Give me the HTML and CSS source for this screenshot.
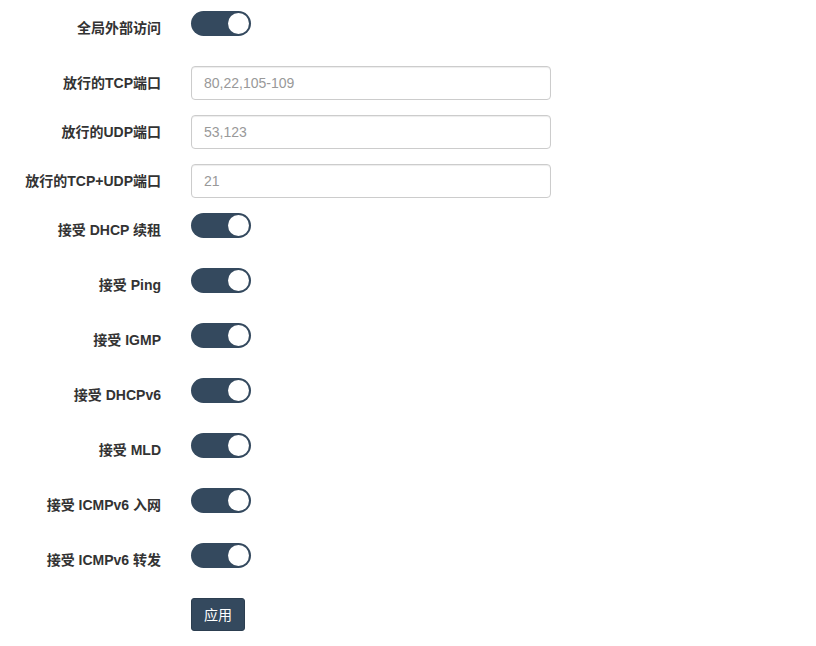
FILE: index.html
```html
<!DOCTYPE html>
<html lang="zh">
<head>
<meta charset="utf-8">
<link rel="stylesheet" href="styles.css">
</head>
<body>
<form class="form">
  <div class="row row-toggle">
    <label class="lbl">全局外部访问</label>
    <div class="ctl"><span class="switch"><span class="knob"></span></span></div>
  </div>
  <div class="row">
    <label class="lbl">放行的TCP端口</label>
    <div class="ctl"><input class="input" type="text" placeholder="80,22,105-109"></div>
  </div>
  <div class="row">
    <label class="lbl">放行的UDP端口</label>
    <div class="ctl"><input class="input" type="text" placeholder="53,123"></div>
  </div>
  <div class="row">
    <label class="lbl">放行的TCP+UDP端口</label>
    <div class="ctl"><input class="input" type="text" placeholder="21"></div>
  </div>
  <div class="row row-toggle">
    <label class="lbl">接受 DHCP 续租</label>
    <div class="ctl"><span class="switch"><span class="knob"></span></span></div>
  </div>
  <div class="row row-toggle">
    <label class="lbl">接受 Ping</label>
    <div class="ctl"><span class="switch"><span class="knob"></span></span></div>
  </div>
  <div class="row row-toggle">
    <label class="lbl">接受 IGMP</label>
    <div class="ctl"><span class="switch"><span class="knob"></span></span></div>
  </div>
  <div class="row row-toggle">
    <label class="lbl">接受 DHCPv6</label>
    <div class="ctl"><span class="switch"><span class="knob"></span></span></div>
  </div>
  <div class="row row-toggle">
    <label class="lbl">接受 MLD</label>
    <div class="ctl"><span class="switch"><span class="knob"></span></span></div>
  </div>
  <div class="row row-toggle">
    <label class="lbl">接受 ICMPv6 入网</label>
    <div class="ctl"><span class="switch"><span class="knob"></span></span></div>
  </div>
  <div class="row row-toggle">
    <label class="lbl">接受 ICMPv6 转发</label>
    <div class="ctl"><span class="switch"><span class="knob"></span></span></div>
  </div>
  <div class="row">
    <span class="lbl"></span>
    <div class="ctl"><button class="btn" type="button">应用</button></div>
  </div>
</form>
</body>
</html>
```
FILE: styles.css
```css
html, body {
  margin: 0;
  padding: 0;
  background: #fff;
}
body {
  font-family: "Liberation Sans", Arial, "Noto Sans CJK SC", sans-serif;
  font-size: 14px;
  line-height: 20px;
  color: #333;
}
.form {
  padding-top: 11px;
}
.row {
  display: grid;
  grid-template-columns: 161px 360px;
  column-gap: 30px;
  margin-bottom: 15px;
}
.row-toggle {
  height: 40px;
}
.lbl {
  text-align: right;
  font-weight: bold;
  padding-top: 7px;
  white-space: nowrap;
}
.ctl {
  display: flex;
  align-items: flex-start;
}
.input {
  box-sizing: border-box;
  width: 360px;
  height: 34px;
  padding: 6px 12px;
  border: 1px solid #ccc;
  border-radius: 4px;
  font-family: "Liberation Sans", Arial, sans-serif;
  font-size: 14px;
  color: #555;
  box-shadow: inset 0 1px 1px rgba(0,0,0,0.075);
  outline: none;
}
.input::placeholder {
  color: #999;
}
.switch {
  position: relative;
  display: block;
  width: 60px;
  height: 25px;
  border-radius: 13px;
  background: #34495e;
}
.knob {
  position: absolute;
  top: 2px;
  right: 2px;
  width: 21px;
  height: 21px;
  border-radius: 50%;
  background: #fff;
}
.btn {
  box-sizing: border-box;
  height: 33px;
  padding: 5px 12px;
  border: 1px solid #2c3e50;
  border-radius: 3px;
  background: #34495e;
  color: #fff;
  font-family: "Liberation Sans", Arial, "Noto Sans CJK SC", sans-serif;
  font-size: 14px;
  line-height: 20px;
}
```
